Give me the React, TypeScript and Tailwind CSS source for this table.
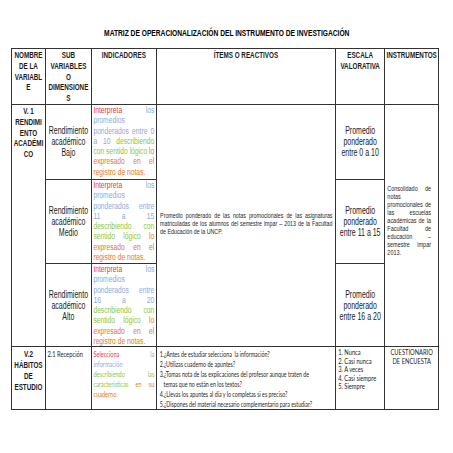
import React from "react";

type Seg = [string, string];

const R = "text-[#e8383d]";
const B = "text-[#8eaadb]";
const G = "text-[#8cc63f]";
const O = "text-[#e27b22]";
const K = "text-[#262626]";

// one justified line of a narrow column, words spread edge to edge
function Line({ segs, last = false }: { segs: Seg[]; last?: boolean }) {
  const words = segs.flatMap(([t, c]) =>
    t
      .split(" ")
      .filter(Boolean)
      .map((w) => [w, c] as Seg)
  );
  return (
    <div className={last ? "flex gap-[0.28em] whitespace-nowrap" : "flex justify-between whitespace-nowrap"}>
      {words.map(([w, c], i) => (
        <span key={i} className={c}>
          {w}
        </span>
      ))}
    </div>
  );
}

function Indicator({ lines }: { lines: Seg[][] }) {
  return (
    <div className="w-[91px] origin-top-left scale-x-[0.7] px-[2px] text-[9.6px] leading-[10.3px]">
      {lines.map((l, i) => (
        <Line key={i} segs={l} last={i === lines.length - 1} />
      ))}
    </div>
  );
}

function Sub({ label }: { label: string }) {
  return (
    <div className="w-[64px] origin-top-left scale-x-[0.7] text-center text-[10px] leading-[11px]">
      Rendimiento
      <br />
      académico
      <br />
      {label}
    </div>
  );
}

function Escala({ range }: { range: string }) {
  return (
    <div className="w-[69px] origin-top-left scale-x-[0.7] text-center text-[10px] leading-[11px]">
      Promedio
      <br />
      ponderado
      <br />
      {range}
    </div>
  );
}

const bajo: Seg[][] = [
  [["Interpreta", R], ["los", B]],
  [["promedios", B]],
  [["ponderados entre 0", B]],
  [["a 10", B], ["describiendo", G]],
  [["con sentido lógico", G], ["lo", O]],
  [["expresado en el", O]],
  [["registro de notas.", O]],
];

const range = (a: string, b: string): Seg[][] => [
  [["Interpreta", R], ["los", B]],
  [["promedios", B]],
  [["ponderados entre", B]],
  [[`${a} a ${b}`, B]],
  [["describiendo con", G]],
  [["sentido lógico", G], ["lo", O]],
  [["expresado en el", O]],
  [["registro de notas.", O]],
];

const items: Seg[][] = [
  [["Promedio ponderado de las notas promocionales de las asignaturas", K]],
  [["matriculadas de los alumnos del semestre impar – 2013 de la Facultad", K]],
  [["de Educación de la UNCP.", K]],
];

const consolidado: Seg[][] = [
  [["Consolidado de", K]],
  [["notas", K]],
  [["promocionales de", K]],
  [["las escuelas", K]],
  [["académicas de la", K]],
  [["Facultad de", K]],
  [["educación –", K]],
  [["semestre impar", K]],
  [["2013.", K]],
];

const habitos: Seg[][] = [
  [["Selecciona", R], ["la", B]],
  [["información", B]],
  [["describiendo las", G]],
  [["características", G], ["en su", O]],
  [["cuaderno.", O]],
];

const td = "border border-[#333] p-0 align-top";
const tdMid = "border border-[#333] p-0 align-middle";
const head = "origin-top-left scale-x-[0.7] pt-[1px] text-center text-[9px] font-bold leading-[10.8px]";

export default function App() {
  return (
    <div className="h-[453px] w-[453px] overflow-hidden bg-white pt-[28px] font-['Liberation_Sans',Arial,sans-serif] text-[#1c1c1c]">
      <div className="mb-[10px] flex h-[10px] justify-center">
        <div className="origin-center scale-x-[0.74] whitespace-nowrap text-[9px] font-bold leading-[10px] text-black">
          MATRIZ DE OPERACIONALIZACIÓN DEL INSTRUMENTO DE INVESTIGACIÓN
        </div>
      </div>

      <table className="ml-[11px] w-[427px] table-fixed border-collapse">
        <colgroup>
          <col className="w-[34px]" />
          <col className="w-[46px]" />
          <col className="w-[65px]" />
          <col className="w-[179px]" />
          <col className="w-[49px]" />
          <col className="w-[54px]" />
        </colgroup>
        <tbody>
          <tr className="h-[54px]">
            <td className={td}>
              <div className={`w-[47px] ${head}`}>
                NOMBRE
                <br />
                DE LA
                <br />
                VARIABL
                <br />E
              </div>
            </td>
            <td className={td}>
              <div className={`w-[64px] ${head}`}>
                SUB
                <br />
                VARIABLES
                <br />O<br />
                DIMENSIONE
                <br />S
              </div>
            </td>
            <td className={td}>
              <div className={`w-[91px] ${head}`}>INDICADORES</div>
            </td>
            <td className={td}>
              <div className={`w-[254px] ${head}`}>ÍTEMS O REACTIVOS</div>
            </td>
            <td className={td}>
              <div className={`w-[69px] ${head}`}>
                ESCALA
                <br />
                VALORATIVA
              </div>
            </td>
            <td className={td}>
              <div className={`w-[76px] whitespace-nowrap ${head}`}>INSTRUMENTOS</div>
            </td>
          </tr>

          <tr className="h-[75px]">
            <td className={td} rowSpan={3}>
              <div className={`w-[47px] ${head}`}>
                V. 1
                <br />
                RENDIMI
                <br />
                ENTO
                <br />
                ACADÉMI
                <br />
                CO
              </div>
            </td>
            <td className={tdMid}>
              <Sub label="Bajo" />
            </td>
            <td className={td}>
              <Indicator lines={bajo} />
            </td>
            <td className={tdMid} rowSpan={3}>
              <div className="w-[228px] origin-top-left scale-x-[0.78] pb-[4px] pl-[4px] pr-[3px] text-[6.8px] leading-[8px]">
                {items.map((l, i) => (
                  <Line key={i} segs={l} last={i === items.length - 1} />
                ))}
              </div>
            </td>
            <td className={tdMid}>
              <Escala range="entre 0 a 10" />
            </td>
            <td className={tdMid} rowSpan={3}>
              <div className="w-[63px] origin-top-left scale-x-[0.78] pb-[10px] pl-[3px] pr-[4px] text-[7px] leading-[8px]">
                {consolidado.map((l, i) => (
                  <Line key={i} segs={l} last={i === consolidado.length - 1} />
                ))}
              </div>
            </td>
          </tr>

          <tr className="h-[84px]">
            <td className={tdMid}>
              <Sub label="Medio" />
            </td>
            <td className={td}>
              <Indicator lines={range("11", "15")} />
            </td>
            <td className={tdMid}>
              <Escala range="entre 11 a 15" />
            </td>
          </tr>

          <tr className="h-[82px]">
            <td className={tdMid}>
              <Sub label="Alto" />
            </td>
            <td className={td}>
              <Indicator lines={range("16", "20")} />
            </td>
            <td className={tdMid}>
              <Escala range="entre 16 a 20" />
            </td>
          </tr>

          <tr className="h-[62px]">
            <td className={td}>
              <div className={`w-[47px] ${head} pt-[2px]`}>
                V.2
                <br />
                HÁBITOS
                <br />
                DE
                <br />
                ESTUDIO
              </div>
            </td>
            <td className={td}>
              <div className="w-[62px] origin-top-left scale-x-[0.72] pl-[2px] pt-[2px] font-['Lato',sans-serif] text-[8px] leading-[10px]">
                2.1 Recepción
              </div>
            </td>
            <td className={td}>
              <div className="w-[91px] origin-top-left scale-x-[0.7] px-[2px] pt-[2px] font-['Lato',sans-serif] text-[8px] leading-[10px]">
                {habitos.map((l, i) => (
                  <Line key={i} segs={l} last={i === habitos.length - 1} />
                ))}
              </div>
            </td>
            <td className={td}>
              <div className="w-[270px] origin-top-left scale-x-[0.66] whitespace-nowrap pl-[4px] pt-[2px] font-['Lato',sans-serif] text-[8px] leading-[10px] text-[#262626]">
                <div>1.¿Antes de estudiar selecciona&nbsp; la información?</div>
                <div>2.¿Utilizas cuaderno de apuntes?</div>
                <div>3.¿Tomas nota de las explicaciones del profesor aunque traten de</div>
                <div className="pl-[6px]">temas que no están en los textos?</div>
                <div>4.¿Llevas los apuntes al día y lo completas si es preciso?</div>
                <div>5.¿Dispones del material necesario complementario para estudiar?</div>
              </div>
            </td>
            <td className={td}>
              <div className="w-[67px] origin-top-left scale-x-[0.72] whitespace-nowrap pl-[3px] pt-[1px] font-['Lato',sans-serif] text-[8px] leading-[8.5px]">
                <div>1. Nunca</div>
                <div>2. Casi nunca</div>
                <div>3. A veces</div>
                <div>4. Casi siempre</div>
                <div>5. Siempre</div>
              </div>
            </td>
            <td className={td}>
              <div className="w-[74px] origin-top-left scale-x-[0.72] pt-[1px] text-center font-['Lato',sans-serif] text-[8px] leading-[9px]">
                CUESTIONARIO
                <br />
                DE ENCUESTA
              </div>
            </td>
          </tr>
        </tbody>
      </table>
    </div>
  );
}
